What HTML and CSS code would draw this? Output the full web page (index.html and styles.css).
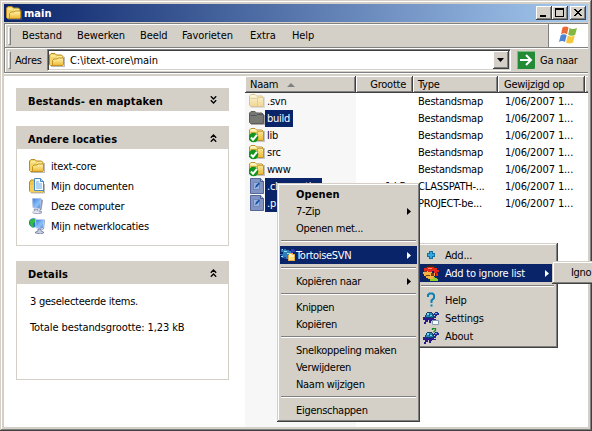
FILE: index.html
```html
<!DOCTYPE html>
<html lang="nl">
<head>
<meta charset="utf-8">
<title>main</title>
<link rel="stylesheet" href="styles.css">
</head>
<body>
<svg class="defs" aria-hidden="true">
  <defs>
    <linearGradient id="gold" x1="0" y1="0" x2="0" y2="1"><stop offset="0" stop-color="#fff6b0"/><stop offset="1" stop-color="#edb735"/></linearGradient>
    <linearGradient id="screen" x1="0" y1="0" x2="1" y2="1"><stop offset="0" stop-color="#3c7de0"/><stop offset=".6" stop-color="#8cc4f8"/><stop offset="1" stop-color="#3568cc"/></linearGradient>
    <symbol id="folder" viewBox="0 0 16 16">
      <path d="M2 14.5h13.5V5" fill="none" stroke="#777" stroke-opacity=".5"/>
      <path d="M.5 12.500V3L2 1.500h4L7.500 3h5L14 4.500v9H1.500z" fill="#f3d569" stroke="#b98b22"/>
      <path d="M2 4h4.500M8 5h5" stroke="#fffbd0"/>
      <path d="M3.500 13.500v-5L5 7h3l1-1h5.500v6.500l-1 1z" fill="url(#gold)" stroke="#c4921e"/>
    </symbol>
    <symbol id="folder-back" viewBox="0 0 16 16">
      <path d="M2 14.500h13.500V4" fill="none" stroke="#777" stroke-opacity=".4"/>
      <path d="M.5 12.500V3L2 1.500h4L7.500 3h5.500L14.500 4.500v9H1.500z" fill="url(#gold)" stroke="#bc9132"/>
      <path d="M1.500 5.500h6l1-1H14M8.500 5v8" fill="none" stroke="#b98c24" stroke-opacity=".65"/>
      <path d="M2 3h4.500" stroke="#fffce0"/>
    </symbol>
    <symbol id="folder-dark" viewBox="0 0 16 16">
      <path d="M.5 12.500V3L2 1.500h4L7.500 3h5.500L14.500 4.500v9H1.500z" fill="#777872" stroke="#5e5d54"/>
      <path d="M1.500 5.500h6l1-1H14" fill="none" stroke="#4e5460"/>
      <path d="M2 14.500h13.500V5" fill="none" stroke="#777" stroke-opacity=".6"/>
    </symbol>
    <symbol id="folder-ok" viewBox="0 0 16 16">
      <use href="#folder-back"/>
      <circle cx="4.500" cy="10.500" r="4.800" fill="#11951d"/>
      <path d="M2 10.500l2 2.300 4-5" fill="none" stroke="#fff" stroke-width="2"/>
    </symbol>
    <symbol id="file" viewBox="0 0 16 16">
      <path d="M1.500.5h10l3 3v12h-13z" fill="#8093c2" stroke="#536799"/>
      <path d="M11.500.5v3h3" fill="#a8b6da" stroke="#45598e"/>
      <path d="M4.500 4.500h6v7h-6z" fill="#9cb1df" stroke="#6d87bd"/>
      <path d="M6 10l1-3 3-2.500 1 1L8 9z" fill="#14539f"/>
    </symbol>
    <symbol id="docs" viewBox="0 0 16 16">
      <path d="M2 15h13.500V6" fill="none" stroke="#777" stroke-opacity=".5"/>
      <path d="M.5 13V4l1.500-2h5l1 2h6.500v10H1.500z" fill="#f0c650" stroke="#bd8b1d"/>
      <path d="M5.500.5h6l3 3v9h-9z" fill="#f8fcff" stroke="#4688c9"/>
      <path d="M11.500.5v3h3" fill="#aed4f6" stroke="#4688c9"/>
      <path d="M7 4h3M7 6h6M7 8h6M7 10h6" stroke="#67aae2"/>
      <path d="M1 7h4v6h9v1H1z" fill="#f5cf55"/>
    </symbol>
    <symbol id="computer" viewBox="0 0 16 16">
      <path d="M11.500 1l2.500 1-1.500 10-2 1z" fill="#9097ad"/>
      <path d="M3.500.5h8.500L11 10.500l-7-1z" fill="url(#screen)" stroke="#a9bde8"/>
      <path d="M5 11l4 .5v1.500l3.500.5v1.500l-3 1-5.500-1v-1.500l1.500-.5z" fill="#c9cee0" stroke="#7a84a8" stroke-width=".7"/>
      <path d="M4 14h6" stroke="#fff"/>
    </symbol>
    <symbol id="network" viewBox="0 0 16 16">
      <circle cx="4.500" cy="4.800" r="4.600" fill="#2870ce"/>
      <path d="M1 2.500L4 .5l3 1-1 3-2 1 1 4-2 0-2-3z" fill="#35b94a"/>
      <path d="M14 1.500l2 .5-1 9-2 1z" fill="#8990ab"/>
      <path d="M6.500 1.500h8.500l-1 9-7-.5z" fill="url(#screen)" stroke="#bccbf0"/>
      <path d="M9 11h3v2l2.500 1v1l-3 1-5-1v-1L9 13z" fill="#c9cee0" stroke="#59648c" stroke-width=".7"/>
    </symbol>
    <symbol id="tortoise" viewBox="0 0 16 16" shape-rendering="crispEdges">
      <path d="M0 8h2v1h9v1h2v1H9v1H8v2H6v-3H5v2H3v2H1v-2h1v-2H0z" fill="#2a1a8c"/>
      <path d="M4 3h5v1h1v1h1v2h1v2H2V6h1V4h1z" fill="#173f6c"/>
      <path d="M4 4h5v1h1v3H3V6h1z" fill="#2385b5"/>
      <path d="M4 4h2v2H4zM7 6h2v1H7z" fill="#77d8e8"/>
      <path d="M6 5h1v2H6zM9 5h1v2H9z" fill="#175486"/>
      <path d="M12 3h3v1h1v2h-2v1h-1v2h-2V8h1V6h-1V4h1z" fill="#252b94"/>
      <path d="M12 4h2v1h-2z" fill="#6db5df"/>
    </symbol>
    <symbol id="chev" viewBox="0 0 8 8">
      <path d="M.8 3.700L3.500 1l2.700 2.700M.8 7.700L3.500 5l2.700 2.700" fill="none" stroke="#000" stroke-width="1.400"/>
    </symbol>
    <symbol id="arrow" viewBox="0 0 4 7"><path d="M0 0l4 3.500L0 7z" fill="currentColor"/></symbol>
  </defs>
</svg>

<div class="window">
  <header class="titlebar">
    <svg class="ic"><use href="#folder"/></svg>
    <span class="title">main</span>
    <div class="controls">
      <span class="btn"><svg viewBox="0 0 12 10"><path d="M2 7h6v2H2z"/></svg></span>
      <span class="btn"><svg viewBox="0 0 12 10"><path d="M1 0h9v9H1zM2 2v6h7V2z" fill-rule="evenodd"/></svg></span>
      <span class="btn close"><svg viewBox="0 0 12 10"><path d="M2 1h2v1h1v1h2V2h1V1h2v1H9v1H8v1H7v1h1v1h1v1h1v1H8V7H7V6H5v1H4v1H2V7h1V6h1V5h1V4H4V3H3V2H2z"/></svg></span>
    </div>
  </header>

  <nav class="menubar">
    <i class="grip"></i>
    <div class="menus"><span>Bestand</span><span>Bewerken</span><span>Beeld</span><span>Favorieten</span><span>Extra</span><span>Help</span></div>
    <div class="flag">
      <svg viewBox="0 0 20 20">
        <path d="M3.500 2.500q3-2 6 0L8 9.200q-3-2-6 0z" fill="#eb6a38"/>
        <path d="M10.500 3q3 2 7.500 0l-1.800 6.700q-3.500 2-7 0z" fill="#83b840"/>
        <path d="M1.700 10.200q3-2 6 0L6 17q-3-2-6 0z" fill="#4e83d3"/>
        <path d="M8.800 10.500q3.500 2 7 0l-1.800 7q-3.500 2-7 0z" fill="#f6c93c"/>
      </svg>
    </div>
  </nav>

  <div class="addressbar">
    <i class="grip"></i>
    <span class="label">Adres</span>
    <div class="combo">
      <svg class="ic"><use href="#folder"/></svg>
      <span class="path">C:\itext-core\main</span>
      <span class="drop"><svg viewBox="0 0 7 4"><path d="M0 0h7L3.500 4z"/></svg></span>
    </div>
    <svg class="go" viewBox="0 0 18 18"><rect width="18" height="18" rx="1.500" fill="#238a35"/><path d="M.5 17V.5H17" fill="none" stroke="#79bf80"/><path d="M3 9h11M9 4l5 5-5 5" fill="none" stroke="#fff" stroke-width="2"/></svg>
    <span class="golabel">Ga naar</span>
  </div>

  <main class="content">
    <aside class="side">
      <section class="panel tasks">
        <h2>Bestands- en maptaken<svg class="chev down"><use href="#chev"/></svg></h2>
      </section>
      <section class="panel places">
        <h2>Andere locaties<svg class="chev"><use href="#chev"/></svg></h2>
        <ul>
          <li><svg class="ic"><use href="#folder"/></svg>itext-core</li>
          <li><svg class="ic"><use href="#docs"/></svg>Mijn documenten</li>
          <li><svg class="ic"><use href="#computer"/></svg>Deze computer</li>
          <li><svg class="ic"><use href="#network"/></svg>Mijn netwerklocaties</li>
        </ul>
      </section>
      <section class="panel details">
        <h2>Details<svg class="chev"><use href="#chev"/></svg></h2>
        <p>3 geselecteerde items.</p>
        <p class="total">Totale bestandsgrootte: 1,23 kB</p>
      </section>
    </aside>

    <div class="list">
      <div class="row head">
        <span>Naam<svg class="sort" viewBox="0 0 8 4"><path d="M4 0l4 4H0z" fill="#808080"/></svg></span><span class="size">Grootte</span><span>Type</span><span>Gewijzigd op</span><span></span>
      </div>
      <div class="row"><span class="name"><svg class="ic faded"><use href="#folder-back"/></svg><b>.svn</b></span><span></span><span>Bestandsmap</span><span class="date">1/06/2007 1...</span></div>
      <div class="row selected"><span class="name"><svg class="ic"><use href="#folder-dark"/></svg><b>build</b></span><span></span><span>Bestandsmap</span><span class="date">1/06/2007 1...</span></div>
      <div class="row"><span class="name"><svg class="ic"><use href="#folder-ok"/></svg><b>lib</b></span><span></span><span>Bestandsmap</span><span class="date">1/06/2007 1...</span></div>
      <div class="row"><span class="name"><svg class="ic"><use href="#folder-ok"/></svg><b>src</b></span><span></span><span>Bestandsmap</span><span class="date">1/06/2007 1...</span></div>
      <div class="row"><span class="name"><svg class="ic"><use href="#folder-ok"/></svg><b>www</b></span><span></span><span>Bestandsmap</span><span class="date">1/06/2007 1...</span></div>
      <div class="row selected"><span class="name"><svg class="ic"><use href="#file"/></svg><b class="long">.classpath</b></span><span class="size">1 kB</span><span>CLASSPATH-...</span><span class="date">1/06/2007 1...</span></div>
      <div class="row selected"><span class="name"><svg class="ic"><use href="#file"/></svg><b>.p</b></span><span></span><span>PROJECT-be...</span><span class="date">1/06/2007 1...</span></div>
      <div class="row filler"><span></span></div>
    </div>
  </main>
</div>

<div class="menu svnmenu">
  <div class="item tall"><svg class="ic" viewBox="0 0 16 16"><path d="M6 4h4v2h2v4h-2v2H6v-2H4V6h2z" fill="#126f9f"/><path d="M7 5h2v2h2v2H9v2H7V9H5V7h2z" fill="#35a9d9"/></svg>Add...</div>
  <div class="item tall active"><svg class="ic" viewBox="0 0 16 16" shape-rendering="crispEdges">
    <path d="M3 1h2V0h6v1h2v3H2V2h1z" fill="#38251f"/>
    <path d="M1 5h8v3h3v3h-1v3H5v-1H3v-2H1V9H0V7h1z" fill="#f2b544"/>
    <path d="M1 6h3v1H1zM3 10h4v1H3zM8 8h3v3H8z" fill="#7c3b13"/>
    <path d="M1 3h3V2h7v1h3v2h2v2h-2v1h1v3h-2V8h-2V6H9v1H5V6H1z" fill="#e3261c"/>
    <path d="M5 3h4v1H5z" fill="#ff8a70"/>
    <path d="M10 12h2v1h2v1h1v2H7v-2h3z" fill="#8fd02d"/></svg>Add to ignore list<svg class="more"><use href="#arrow"/></svg></div>
  <hr>
  <div class="item tall"><svg class="ic" viewBox="0 0 16 16"><path d="M5 5V3l1.500-1.500h3L11 3v3L8.500 8.500V11M8.500 12.500v2" fill="none" stroke="#0f7fb4" stroke-width="2"/></svg>Help</div>
  <div class="item tall"><svg class="ic" viewBox="0 0 16 16"><use href="#tortoise" y="-1"/><path d="M9.500 10.500h6v4h-6z" fill="#fff" stroke="#809db8"/></svg>Settings</div>
  <div class="item tall"><svg class="ic" viewBox="0 0 16 16"><use href="#tortoise" y="1"/><path d="M9.500 2V.7h3v1.800l-1.500 1v1" fill="none" stroke="#188a25" stroke-width="1.300"/></svg>About</div>
</div>

<div class="menu context">
  <div class="item default">Openen</div>
  <div class="item">7-Zip<svg class="more"><use href="#arrow"/></svg></div>
  <div class="item">Openen met...</div>
  <hr>
  <div class="item tall active"><svg class="ic" viewBox="0 0 16 16" shape-rendering="crispEdges">
    <path d="M1 2h2v1h1V2h2v1h3v1h2v2h1v3H8v3H6v-2H4v1H2V8H0V7h3V5H1z" fill="#2e7dba"/>
    <path d="M4 4h3v1H4zM2 2h1v1H2zM7 6h2v1H7zM1 9h2v1H1z" fill="#8be3ee"/>
    <path d="M11 2h3v1h1v2h-2v1h-2zM4 10h2v2H4z" fill="#3038b4"/>
    <path d="M8 8h1V6h4v1h2v7H8z" fill="#e4ad4b"/>
    <path d="M9 7h3v1h2v5H9z" fill="#fff0b0"/>
    <path d="M10 10h4v3h-4z" fill="#ffdc7c"/></svg>TortoiseSVN<svg class="more"><use href="#arrow"/></svg></div>
  <hr>
  <div class="item">Kopiëren naar<svg class="more"><use href="#arrow"/></svg></div>
  <hr>
  <div class="item">Knippen</div>
  <div class="item">Kopiëren</div>
  <hr>
  <div class="item">Snelkoppeling maken</div>
  <div class="item">Verwijderen</div>
  <div class="item">Naam wijzigen</div>
  <hr>
  <div class="item">Eigenschappen</div>
</div>

<div class="menu ignoremenu"><div class="item">Igno</div></div>
</body>
</html>
```
FILE: styles.css
```css
* { box-sizing: border-box; }
html, body { margin: 0; width: 592px; height: 431px; overflow: hidden; }
body {
  position: relative;
  font: 11px/17px Tahoma, "DejaVu Sans Condensed", "DejaVu Sans", sans-serif;
  letter-spacing: -0.25px;
  color: #000;
  background: #d4d0c8;
  white-space: nowrap;
}
svg { display: block; flex: none; }
.defs { position: absolute; width: 0; height: 0; }
.ic { width: 16px; height: 16px; }

.window {
  height: 431px;
  display: flex;
  flex-direction: column;
  padding: 2px;
  background: #d4d0c8;
  box-shadow: inset -1px -1px #404040, inset 1px 1px #d4d0c8, inset -2px -2px #808080, inset 2px 2px #fff;
}
.titlebar {
  height: 18px;
  margin: 2px 2px 1px;
  padding: 0 2px;
  display: flex;
  align-items: center;
  background: linear-gradient(90deg, #0a246a, #a6caf0);
  color: #fff;
}
.title { margin-left: 2px; font-weight: bold; letter-spacing: 0; }
.controls { display: flex; margin-left: auto; }
.btn {
  width: 16px;
  height: 14px;
  padding: 2px;
  background: #d4d0c8;
  box-shadow: inset -1px -1px #404040, inset 1px 1px #fff, inset -2px -2px #808080;
}
.btn svg { width: 12px; height: 10px; shape-rendering: crispEdges; }
.close { margin-left: 2px; }

.menubar {
  height: 25px;
  margin: 0 2px;
  display: flex;
  align-items: center;
  border: solid #808080;
  border-width: 1px 0 1px 1px;
  box-shadow: inset 1px 1px #fff;
}
.grip {
  width: 3px;
  height: 18px;
  margin-left: 3px;
  border: 1px solid;
  border-color: #fff #808080 #808080 #fff;
}
.menus {
  display: grid;
  grid-template-columns: 55px 63px 42px 68px 42px 40px;
  margin-left: 11px;
  letter-spacing: -0.1px;
}
.flag {
  width: 40px;
  height: 23px;
  margin-left: auto;
  padding: 1px 0 0 10px;
  border-left: 1px solid #808080;
  background: #fff;
}
.flag svg { width: 20px; height: 20px; }

.addressbar {
  height: 25px;
  margin: 0 2px;
  display: flex;
  align-items: center;
  border: solid #808080;
  border-width: 0 0 1px 1px;
  box-shadow: inset 1px 1px #fff, 0 1px #fff;
}
.label { width: 32px; margin-left: 4px; }
.combo {
  width: 464px;
  height: 22px;
  display: flex;
  align-items: center;
  padding-left: 1px;
  border: 1px solid;
  border-color: #808080 #fff #fff #808080;
  background: #fff;
  box-shadow: inset 1px 1px #404040, inset -1px -1px #d4d0c8;
}
.path { margin-left: 5px; padding-top: 1px; letter-spacing: -0.05px; }
.drop {
  width: 16px;
  height: 18px;
  margin: 0 1px 0 auto;
  padding: 7px 0 0 4px;
  background: #d4d0c8;
  box-shadow: inset -1px -1px #404040, inset 1px 1px #fff, inset -2px -2px #808080;
}
.drop svg { width: 7px; height: 4px; }
.go { width: 18px; height: 18px; margin-left: 6px; }
.golabel { margin-left: 5px; }

.content {
  height: 351px;
  margin: 3px 2px 0;
  display: grid;
  grid-template-columns: 241px 343px;
  background: #fff;
}
.side { padding: 12px 16px 0 12px; }
.panel { border: 1px solid #d4d0c8; }
.panel h2 {
  display: flex;
  align-items: center;
  justify-content: space-between;
  height: 22px;
  margin: 0;
  padding: 2px 10px 0 11px;
  background: #d4d0c8;
  font-size: 11px;
  letter-spacing: 0.15px;
}
.chev { width: 8px; height: 8px; margin-top: -2px; }
.down { transform: scaleY(-1); }
.tasks { height: 23px; margin-bottom: 15px; }
.places { height: 120px; margin-bottom: 15px; }
.places ul { margin: 0; padding: 7px 0 0 12px; list-style: none; letter-spacing: -0.2px; }
.places li { display: flex; align-items: center; gap: 6px; height: 20px; }
.details { height: 119px; }
.details p { margin: 9px 0 0 13px; }
.details .total { letter-spacing: -0.1px; }

.list { display: flex; flex-direction: column; overflow: hidden; }
.row {
  display: grid;
  grid-template-columns: 111px 57px 85px 87px 3px;
  height: 17px;
  flex: none;
}
.row > span { padding-left: 5px; overflow: hidden; }
.row > span:first-child { background: #f7f7f7; }
.row .date { padding-left: 7px; letter-spacing: -0.1px; }
.row > .size { padding: 0 7px 0 0; text-align: right; }
.row.head > span {
  display: flex;
  align-items: center;
  background: #d4d0c8;
  box-shadow: inset -1px -1px #404040, inset 1px 1px #fff, inset -2px -2px #808080;
}
.row.head > .size { justify-content: flex-end; }
.row.head > span:nth-child(4) { padding-left: 6px; }
.sort { width: 8px; height: 4px; margin-left: 9px; }
.row > .name { display: flex; padding-left: 4px; }
.name b { padding: 0 3px 0 2px; font-weight: normal; }
.name .long { width: 57px; }
.selected b { background: #0a246a; color: #fff; }
.faded { opacity: .5; }
.row.filler { flex: 1; }

.menu {
  position: absolute;
  padding: 3px;
  background: #d4d0c8;
  box-shadow: inset -1px -1px #404040, inset 1px 1px #d4d0c8, inset -2px -2px #808080, inset 2px 2px #fff;
}
.item {
  position: relative;
  display: flex;
  align-items: center;
  height: 17px;
  padding-left: 16px;
  letter-spacing: -0.3px;
}
.item.tall { height: 18px; }
.item .ic { margin: 0 0 0 -16px; }
.active { background: #0a246a; color: #fff; }
.item.default { font-weight: bold; letter-spacing: 0.1px; }
.more { width: 4px; height: 7px; margin: 0 6px 0 auto; }
.menu hr {
  height: 2px;
  margin: 3px 1px 4px;
  border: solid;
  border-width: 1px 0;
  border-color: #808080 transparent #fff;
}
.context { left: 277px; top: 183px; width: 143px; height: 239px; }
.svnmenu { left: 417px; top: 243px; width: 141px; height: 105px; }
.svnmenu .item { padding-left: 25px; letter-spacing: -0.25px; }
.svnmenu .ic { margin: 0 6px 0 -22px; }
.ignoremenu { left: 552px; top: 261px; width: 60px; height: 23px; }
```
